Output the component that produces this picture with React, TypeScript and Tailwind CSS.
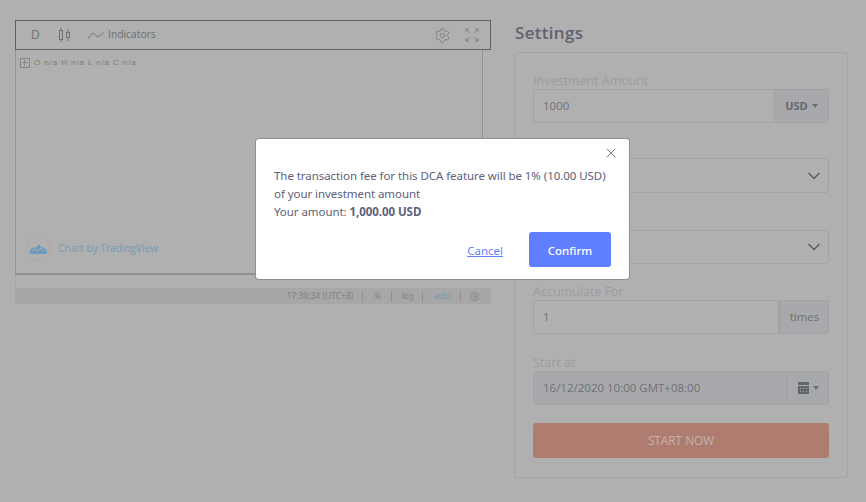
import { ChevronDown, Settings, X } from "lucide-react";

const Caret = () => (
  <span className="ml-[4px] inline-block border-x-[3px] border-t-[4px] border-x-transparent border-t-[#6b6e76]" />
);

const Field = ({
  label,
  className,
  children,
}: {
  label: string;
  className: string;
  children: React.ReactNode;
}) => (
  <div className={className}>
    <div className="h-[18px] pt-px text-[12.500px] leading-[18px] text-[#9c9c9f]">{label}</div>
    <div className="flex">{children}</div>
  </div>
);

const Toolbar = () => (
  <div className="flex h-[30px] items-center border border-[#5f5f5f] text-[#6f6f6f]">
    <span className="ml-[15px] w-[10px] text-[12px]">D</span>
    <svg className="ml-[18px]" width="13" height="14" viewBox="0 0 13 14" fill="none" stroke="#707070">
      <rect x="0.5" y="2.5" width="3" height="9" />
      <path d="M2 0v2.5M2 11.5V14M9 1v3.5M9 9.500V13" />
      <rect x="7.500" y="4.500" width="3" height="5" />
    </svg>
    <svg className="ml-[16px]" width="16" height="8" viewBox="0 0 16 8" fill="none" stroke="#707070">
      <path d="M0.500 7.500C3 3 5 1 7 3.500S10 7 15.500 1.500" />
    </svg>
    <span className="ml-[4px] text-[10.300px]">Indicators</span>
    <Settings className="ml-auto" size={17} strokeWidth={1} color="#6e6e6e" />
    <svg className="ml-[14px] mr-[11px]" width="14" height="14" viewBox="0 0 14 14" fill="none" stroke="#808080">
      <path d="M5 5 1 1M1 4V1h3M9 5l4-4M10 1h3v3M5 9l-4 4M1 10v3h3M9 9l4 4M13 10v3h-3" />
    </svg>
  </div>
);

const ChartPanel = () => (
  <div className="relative h-[225px] w-[468px] border-x border-b-2 border-x-[#939393] border-b-[#8f8f8f]">
    <div className="flex h-[26px] items-center pl-1">
      <span className="relative h-[10px] w-[10px] border border-[#858585]">
        <span className="absolute left-[1px] top-[3px] h-px w-[6px] bg-[#858585]" />
        <span className="absolute left-[3px] top-[1px] h-[6px] w-px bg-[#858585]" />
      </span>
      <span className="ml-[4px] font-['Liberation_Sans',sans-serif] text-[8px] tracking-[0.9px] text-[#7c7c7c]">
        O n/a H n/a L n/a C n/a
      </span>
    </div>
    <div className="absolute bottom-[12px] left-[10px] flex items-center">
      <div className="flex h-[25px] w-[25px] items-center justify-center rounded-full border border-[#aaaaaa]">
        <svg width="17" height="10" viewBox="0 0 17 10">
          <path d="M0 10V6l4-3 2 1 3-4 3 4 2-1 3 4v3z" fill="#6c9cbd" />
          <path d="M2 8l3-3 3 2 3-3 3 2" fill="none" stroke="#b0b0b0" />
        </svg>
      </div>
      <span className="ml-[7px] pt-px text-[10.100px] text-[#6f9dbc]">Chart by TradingView</span>
    </div>
  </div>
);

const StatusBar = () => (
  <>
    <div className="h-[13px] border-l border-[#a6a6a6]" />
    <div className="flex h-[16px] items-center justify-end bg-[#a7a7a7] pr-[11px] font-['Noto_Sans',sans-serif] text-[8px] text-[#828282]">
      <span className="text-[8.500px]">17:39:34 (UTC+8)</span>
      <span className="ml-[9px] mr-[11px] h-[11px] w-px bg-[#919191]" />
      <span>%</span>
      <span className="mx-[10px] h-[11px] w-px bg-[#919191]" />
      <span>log</span>
      <span className="ml-[8px] mr-[11px] h-[11px] w-px bg-[#919191]" />
      <span className="text-[#6f9dbc]">auto</span>
      <span className="ml-[9px] mr-[8px] h-[11px] w-px bg-[#919191]" />
      <Settings size={11} strokeWidth={1.5} color="#7d7d7d" />
    </div>
  </>
);

const SettingsCard = () => (
  <div className="h-[426px] rounded-[3px] border border-[#a4a4a4] px-[18px] pt-[18px]">
    <Field label="Investment Amount" className="mb-[17px]">
      <div className="flex h-[34px] flex-1 items-center rounded-l-[3px] border border-[#a3a3a3] pl-[9px] text-[11.500px] text-[#6f7074]">
        1000
      </div>
      <div className="flex h-[34px] w-[54px] items-center justify-center rounded-r-[3px] border border-l-0 border-[#a3a3a3] bg-[#a7a9ac] text-[11px] font-bold text-[#64666e]">
        USD
        <Caret />
      </div>
    </Field>
    <Field label="" className="mb-[19px]">
      <div className="flex h-[35px] flex-1 items-center justify-end rounded-[3px] border border-[#a3a3a3] pr-[4px]">
        <ChevronDown size={20} color="#5f6066" />
      </div>
    </Field>
    <Field label="" className="mb-[18px]">
      <div className="flex h-[34px] flex-1 items-center justify-end rounded-[3px] border border-[#a3a3a3] pr-[4px]">
        <ChevronDown size={20} color="#5f6066" />
      </div>
    </Field>
    <Field label="Accumulate For" className="mb-[19px]">
      <div className="flex h-[34px] flex-1 items-center rounded-l-[3px] border border-[#a3a3a3] pl-[9px] text-[11.500px] text-[#6f7074]">
        1
      </div>
      <div className="flex h-[34px] w-[50px] items-center justify-center rounded-r-[3px] border border-l-2 border-[#a3a3a3] bg-[#a7a9ac] text-[11.500px] text-[#6f7074]">
        times
      </div>
    </Field>
    <Field label="Start at" className="mb-[18px]">
      <div className="flex h-[34px] flex-1 items-center rounded-l-[3px] border border-[#a3a3a3] bg-[#a7a9ac] pl-[9px] text-[11.500px] text-[#6f7074]">
        16/12/2020 10:00 GMT+08:00
      </div>
      <div className="flex h-[34px] w-[42px] items-center justify-center rounded-r-[3px] border border-[#a3a3a3] bg-[#a7a9ac]">
        <svg width="11" height="12" viewBox="0 0 11 12" fill="#64666e">
          <path d="M0 0h11v3H0zM0 4h11v8H0z" />
          <path d="M2 6h1v1H2zM5 6h1v1H5zM8 6h1v1H8zM2 9h1v1H2zM5 9h1v1H5zM8 9h1v1H8z" fill="#a7a9ac" />
        </svg>
        <Caret />
      </div>
    </Field>
    <div className="flex h-[35px] items-center justify-center rounded-[3px] bg-[#af7d6f] text-[11.800px] text-[#c4b4ad]">
      START NOW
    </div>
  </div>
);

const ConfirmModal = () => (
  <div className="absolute left-[256px] top-[139px] h-[140px] w-[373px] rounded-[3px] bg-white px-[18px] pt-[28px] font-['Noto_Sans',sans-serif] shadow-[0_0_0_1px_#8f8f8f]">
    <X className="absolute right-[10px] top-[6px]" size={16} strokeWidth={1.250} color="#5d607a" />
    <p className="whitespace-nowrap text-[11.500px] leading-[18px] tracking-[-0.06px] text-[#5d607a]">
      The transaction fee for this DCA feature will be 1% (10.00 USD)
      <br />
      of your investment amount
      <br />
      Your amount: <strong className="font-bold">1,000.00 USD</strong>
    </p>
    <div className="absolute bottom-[12px] right-[18px] flex items-center">
      <a className="mr-[26px] pt-[2px] text-[11.500px] text-[#5f7fff] underline">Cancel</a>
      <button className="h-[35px] w-[82px] rounded-[3px] bg-[#5f7fff] pt-[2px] text-[11.500px] font-medium text-white">
        Confirm
      </button>
    </div>
  </div>
);

export default function App() {
  return (
    <div className="relative flex h-[502px] w-[866px] overflow-hidden bg-[#b0b0b0] pl-[15px] pt-[20px] font-['Open_Sans',sans-serif]">
      <div className="w-[476px]">
        <Toolbar />
        <ChartPanel />
        <StatusBar />
      </div>
      <div className="ml-[23px] w-[334px]">
        <h2 className="h-[32px] pl-px text-[17px] font-semibold leading-[26px] tracking-[0.3px] text-[#5f626e]">
          Settings
        </h2>
        <SettingsCard />
      </div>
      <ConfirmModal />
    </div>
  );
}
